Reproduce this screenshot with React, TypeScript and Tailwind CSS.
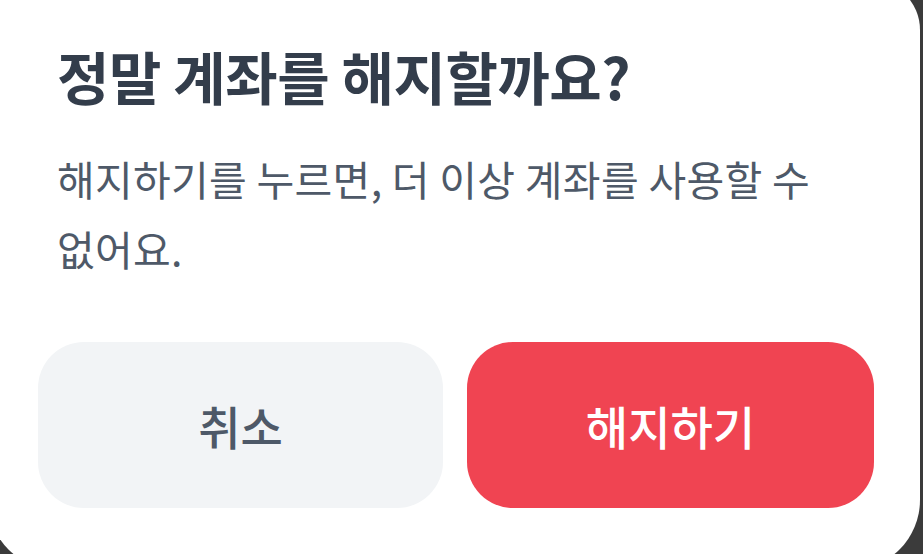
export default function App() {
  return (
    <div
      className="w-[923px] h-[554px] overflow-hidden bg-[#3b3b3b]"
      style={{ fontFamily: '"Noto Sans CJK KR", "Noto Sans", sans-serif' }}
    >
      {/* dialog card */}
      <div className="-ml-[12px] -mt-[20px] w-[932px] h-[590px] bg-white rounded-tr-[50px] rounded-b-[70px] pl-[50px] pr-[40px] pt-[63px]">
        <h2 className="ml-[19px] text-[57px] leading-[64px] font-bold text-[#333d4b] tracking-[-0.5px]">
          정말 계좌를 해지할까요?
        </h2>
        <p className="ml-[19px] mt-[36px] w-[810px] text-[41px] leading-[70px] text-[#4e5968] tracking-[0.3px] break-keep">
          해지하기를 누르면, 더 이상 계좌를 사용할 수 없어요.
        </p>
        <div className="mt-[59px] flex gap-[24px]">
          <button className="w-[405px] h-[166px] rounded-[46px] bg-[#f2f4f6] text-[46px] font-medium text-[#4e5968]">
            취소
          </button>
          <button className="w-[407px] h-[166px] rounded-[46px] bg-[#f04452] text-[46px] font-medium text-white">
            해지하기
          </button>
        </div>
      </div>
    </div>
  );
}
